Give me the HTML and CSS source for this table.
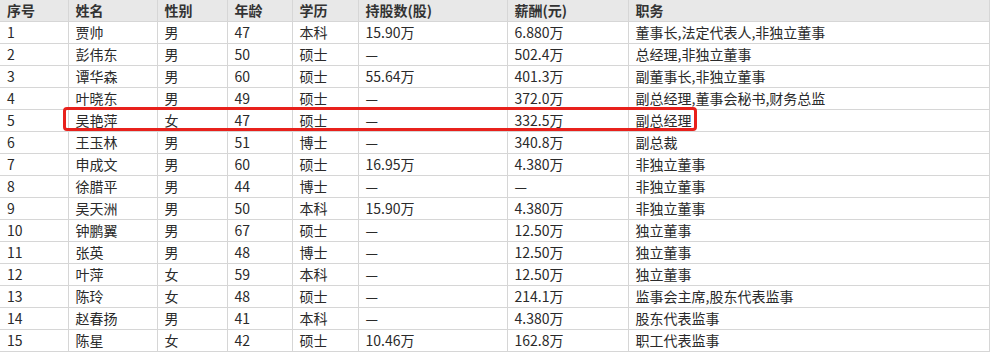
FILE: index.html
```html
<!DOCTYPE html>
<html lang="zh">
<head>
<meta charset="utf-8">
<link rel="stylesheet" href="styles.css">
</head>
<body>
<div class="wrap">
<table class="tbl">
<colgroup>
<col class="c1"><col class="c2"><col class="c3"><col class="c4"><col class="c5"><col class="c6"><col class="c7"><col class="c8">
</colgroup>
<thead>
<tr><th>序号</th><th>姓名</th><th>性别</th><th>年龄</th><th>学历</th><th>持股数(股)</th><th>薪酬(元)</th><th>职务</th></tr>
</thead>
<tbody>
<tr><td>1</td><td>贾帅</td><td>男</td><td>47</td><td>本科</td><td>15.90万</td><td>6.880万</td><td>董事长,法定代表人,非独立董事</td></tr>
<tr><td>2</td><td>彭伟东</td><td>男</td><td>50</td><td>硕士</td><td>—</td><td>502.4万</td><td>总经理,非独立董事</td></tr>
<tr><td>3</td><td>谭华森</td><td>男</td><td>60</td><td>硕士</td><td>55.64万</td><td>401.3万</td><td>副董事长,非独立董事</td></tr>
<tr><td>4</td><td>叶晓东</td><td>男</td><td>49</td><td>硕士</td><td>—</td><td>372.0万</td><td>副总经理,董事会秘书,财务总监</td></tr>
<tr><td>5</td><td>吴艳萍</td><td>女</td><td>47</td><td>硕士</td><td>—</td><td>332.5万</td><td>副总经理</td></tr>
<tr><td>6</td><td>王玉林</td><td>男</td><td>51</td><td>博士</td><td>—</td><td>340.8万</td><td>副总裁</td></tr>
<tr><td>7</td><td>申成文</td><td>男</td><td>60</td><td>硕士</td><td>16.95万</td><td>4.380万</td><td>非独立董事</td></tr>
<tr><td>8</td><td>徐腊平</td><td>男</td><td>44</td><td>博士</td><td>—</td><td>—</td><td>非独立董事</td></tr>
<tr><td>9</td><td>吴天洲</td><td>男</td><td>50</td><td>本科</td><td>15.90万</td><td>4.380万</td><td>非独立董事</td></tr>
<tr><td>10</td><td>钟鹏翼</td><td>男</td><td>67</td><td>硕士</td><td>—</td><td>12.50万</td><td>独立董事</td></tr>
<tr><td>11</td><td>张英</td><td>男</td><td>48</td><td>博士</td><td>—</td><td>12.50万</td><td>独立董事</td></tr>
<tr><td>12</td><td>叶萍</td><td>女</td><td>59</td><td>本科</td><td>—</td><td>12.50万</td><td>独立董事</td></tr>
<tr><td>13</td><td>陈玲</td><td>女</td><td>48</td><td>硕士</td><td>—</td><td>214.1万</td><td>监事会主席,股东代表监事</td></tr>
<tr><td>14</td><td>赵春扬</td><td>男</td><td>41</td><td>本科</td><td>—</td><td>4.380万</td><td>股东代表监事</td></tr>
<tr><td>15</td><td>陈星</td><td>女</td><td>42</td><td>硕士</td><td>10.46万</td><td>162.8万</td><td>职工代表监事</td></tr>
</tbody>
</table>
<div class="highlight"></div>
</div>
</body>
</html>
```
FILE: styles.css
```css
html, body {
  margin: 0;
  padding: 0;
  background: #ffffff;
}
.wrap {
  position: relative;
  width: 990px;
  height: 352px;
  overflow: hidden;
}
.tbl {
  border-collapse: collapse;
  table-layout: fixed;
  width: 989px;
  margin-top: -1px;
  font-family: "Noto Sans CJK SC", "Noto Sans", sans-serif;
  font-size: 14px;
  color: #2a2a2a;
}
.c1 { width: 68px; }
.c2 { width: 89px; }
.c3 { width: 70px; }
.c4 { width: 65px; }
.c5 { width: 66px; }
.c6 { width: 149px; }
.c7 { width: 121px; }
.c8 { width: 361px; }
.tbl th, .tbl td {
  height: 21px;
  padding: 0 0 0 7px;
  border: 1px solid #d6d6d6;
  text-align: left;
  white-space: nowrap;
  overflow: hidden;
  line-height: 21px;
}
.tbl th:first-child, .tbl td:first-child {
  border-left: none;
}
.tbl th {
  background: #e8e8e8;
  font-weight: bold;
  color: #333333;
  border-top: 1px solid #e8e8e8;
}
.highlight {
  position: absolute;
  left: 63px;
  top: 107px;
  width: 628px;
  height: 18px;
  border: 3px solid #e8211c;
  border-radius: 4px;
}
```
